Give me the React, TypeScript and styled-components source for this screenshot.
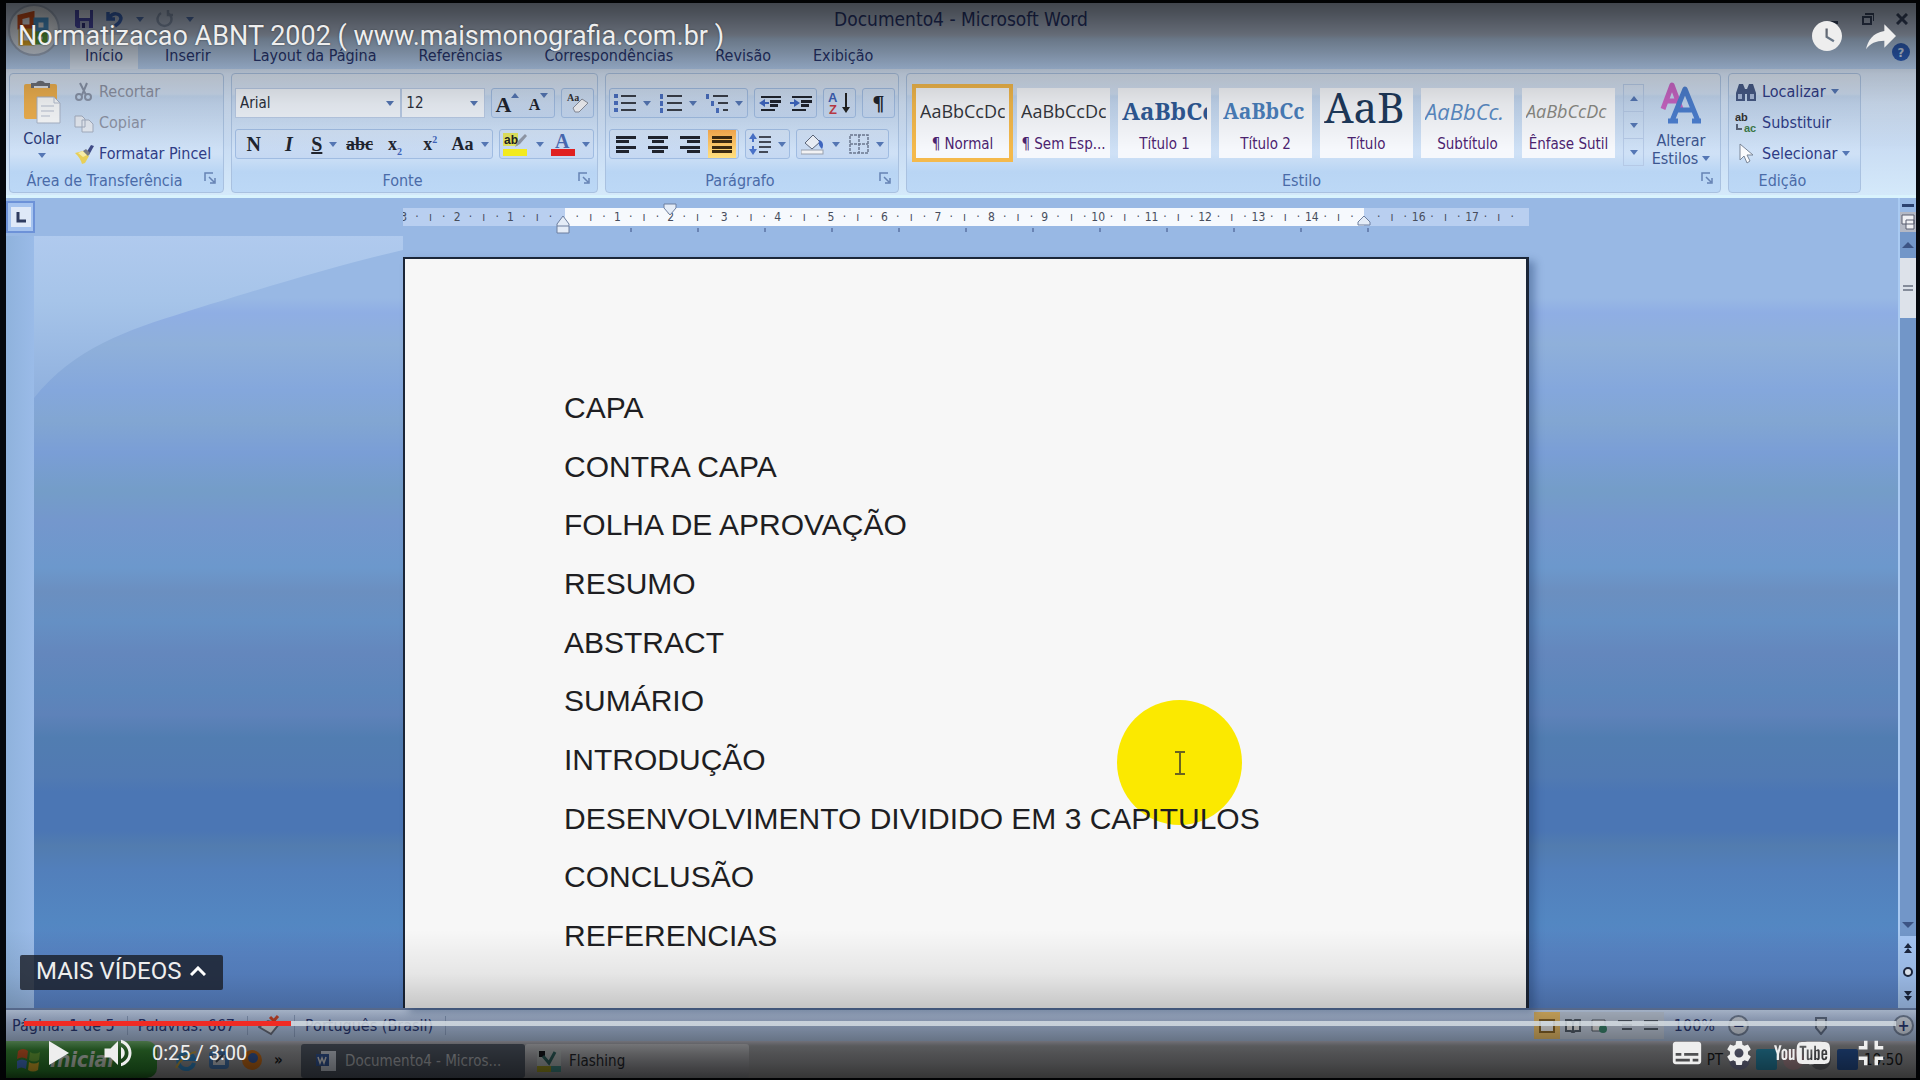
import React, { useState } from 'react';
import styled, { createGlobalStyle, css } from 'styled-components';
import { MdWatchLater, MdReply, MdSubtitles, MdSettings, MdFullscreenExit, MdVolumeUp } from 'react-icons/md';
import { ImYoutube2 } from 'react-icons/im';

const GlobalStyle = createGlobalStyle`
  * { box-sizing: border-box; }
  body { margin: 0; background: #000; }
  button, select, input { font: inherit; color: inherit; margin: 0; padding: 0; border: 0; background: none; }
  button { cursor: pointer; }
  svg { display: block; flex: none; }
`;

const uiFont = "'DejaVu Sans Condensed', 'DejaVu Sans', sans-serif";

const Player = styled.main`
  display: grid;
  min-height: 100vh;
  background: #05080d;
`;

/* ---------- recorded window ---------- */

const WordWindow = styled.section`
  grid-area: 1 / 1;
  display: flex;
  flex-direction: column;
  min-width: 0;
  border: solid #05080d;
  border-width: 3px 4px 2px 6px;
  font-family: ${uiFont};
  font-size: 16px;
  color: #2b3a78;
  white-space: nowrap;
  overflow: hidden;
`;

const Header = styled.header`
  position: relative;
  background: linear-gradient(#c3d0e6 0 32px, #bfd8f6 36px, #b6d0f2 100%);
`;

const TitleBar = styled.div`
  display: grid;
  grid-template-columns: 1fr auto 1fr;
  align-items: center;
  height: 32px;
  padding: 0 8px;
  font-size: 19px;
  line-height: 22px;
`;

const QuickAccess = styled.div`
  display: flex;
  align-items: center;
  gap: 12px;
  padding-left: 60px;
`;

const WindowButtons = styled.div`
  display: flex;
  justify-content: flex-end;
  gap: 22px;
`;

const PlainButton = styled.button`
  display: flex;
  align-items: center;
  justify-content: center;
`;

const OfficeButton = styled.button`
  position: absolute;
  left: 2px;
  top: 1px;
  width: 52px;
  height: 52px;
  border: 2px solid #a8b6cc;
  border-radius: 50%;
  background: radial-gradient(circle at 50% 40%, #fff, #dde6f2 80%);
  display: flex;
  align-items: center;
  justify-content: center;
`;

const Tabs = styled.nav`
  display: flex;
  gap: 12px;
  height: 34px;
  padding: 0 6px 0 64px;
`;

const Tab = styled.button<{ $active?: boolean }>`
  padding: 6px 15px 0;
  border-radius: 4px 4px 0 0;
  background: ${p => (p.$active ? '#dce8f7' : 'none')};
`;

const HelpButton = styled.button`
  margin-left: auto;
  align-self: center;
  width: 18px;
  height: 18px;
  border-radius: 50%;
  background: #2f63c4;
  color: #dbe8ff;
  font-size: 13px;
  font-weight: bold;
`;

const Ribbon = styled.div`
  display: flex;
  gap: 7px;
  padding: 4px 3px 2px;
  background: linear-gradient(#d6e4f6, #c9dcf3 60%, #d4e9fa);
  border-bottom: 3px solid #d9f3fd;
`;

const Group = styled.fieldset<{ $w?: number }>`
  display: flex;
  flex-direction: column;
  flex: none;
  width: ${p => (p.$w ? p.$w + 'px' : 'auto')};
  height: 120px;
  margin: 0;
  padding: 0;
  min-width: 0;
  border: 1px solid #a9c1e0;
  border-radius: 4px;
  background: linear-gradient(#dbe5f2 0, #cfdef2 20px, #c3d7f0 22px, #cfe1f6 80px, #b9d5f4 98px, #bcd8f6);
`;

const GroupBody = styled.div<{ $gap?: number }>`
  flex: 1;
  display: flex;
  gap: ${p => p.$gap ?? 0}px;
`;

const GroupLabel = styled.div`
  position: relative;
  height: 22px;
  line-height: 22px;
  text-align: center;
  padding-right: 24px;
  color: #4a6ba8;
`;

const Launcher = styled.button`
  position: absolute;
  right: 6px;
  top: 2px;
`;

const PasteButton = styled.button`
  display: flex;
  flex-direction: column;
  align-items: center;
  width: 64px;
  padding-top: 6px;
  gap: 5px;
`;

const CommandList = styled.div`
  display: flex;
  flex-direction: column;
  padding-top: 2px;
`;

const Command = styled.button<{ $dim?: boolean }>`
  display: flex;
  align-items: center;
  gap: 5px;
  height: 31px;
  color: ${p => (p.$dim ? '#8d93a5' : '#2f3c86')};
`;

const ToolRows = styled.div`
  flex: 1;
  display: flex;
  flex-direction: column;
  gap: 11px;
  padding: 14px 3px 0;
`;

const ToolRow = styled.div<{ $gap?: number }>`
  display: flex;
  gap: ${p => p.$gap ?? 6}px;
`;

const ToolSet = styled.div<{ $w: number }>`
  display: flex;
  align-items: center;
  justify-content: space-around;
  width: ${p => p.$w}px;
  height: 30px;
  border: 1px solid #a0bce2;
  border-radius: 3px;
  background: linear-gradient(#cfdff3, #c5d8f2);
`;

const Tool = styled.button<{ $on?: boolean; $tight?: boolean }>`
  display: flex;
  align-items: ${p => (p.$tight ? 'flex-start' : 'center')};
  justify-content: center;
  gap: ${p => (p.$tight ? 0 : 7)}px;
  height: 28px;
  min-width: 28px;
  padding-top: ${p => (p.$tight ? 4 : 0)}px;
  color: #20242e;
  ${p => p.$on && css`background: linear-gradient(#f6a94e, #ffdf7e);`}
`;

const Glyph = styled.span<{ $size?: number; $italic?: boolean; $bold?: boolean; $line?: string }>`
  font-family: 'Liberation Serif', serif;
  font-size: ${p => p.$size ?? 18}px;
  line-height: 24px;
  font-style: ${p => (p.$italic ? 'italic' : 'normal')};
  font-weight: ${p => (p.$bold ? 'bold' : 'normal')};
  text-decoration: ${p => p.$line ?? 'none'};
  sub, sup { font-size: 10px; color: #3e62b8; line-height: 0; }
`;

const Combo = styled.div<{ $w: number }>`
  display: flex;
  align-items: center;
  width: ${p => p.$w}px;
  height: 30px;
  padding-right: 6px;
  border: 1px solid #b9cbe6;
  background: #eff4fb;
  color: #2a2f3c;
  font-size: 15px;
  select { flex: 1; min-width: 0; appearance: none; padding-left: 4px; outline: 0; }
`;

const Gallery = styled.div`
  display: flex;
  padding: 10px 0 0 5px;
`;

const StyleTile = styled.button<{ $on?: boolean }>`
  display: flex;
  flex-direction: column;
  width: 93px;
  height: 70px;
  margin: 4px 4px 0;
  padding: 0 4px;
  overflow: hidden;
  background: #f6f8fc;
  color: #4c2370;
  text-align: center;
  ${p => p.$on && css`outline: 4px solid #f4b94c;`}
`;

const Sample = styled.span<{ $c: string; $size: number; $serif?: boolean; $bold?: boolean; $italic?: boolean }>`
  width: 100%;
  height: 46px;
  line-height: ${p => (p.$size > 30 ? 38 : 46)}px;
  overflow: hidden;
  text-align: left;
  color: ${p => p.$c};
  font-family: ${p => (p.$serif ? "'Noto Serif', 'DejaVu Serif Condensed', 'DejaVu Serif', serif" : "'Open Sans', sans-serif")};
  font-size: ${p => p.$size}px;
  font-weight: ${p => (p.$bold ? 'bold' : 'normal')};
  font-style: ${p => (p.$italic ? 'italic' : 'normal')};
`;

const TileName = styled.span`
  width: 100%;
  display: flex;
  justify-content: center;
  line-height: 20px;
  font-size: 15px;
`;

const GalleryScroll = styled.div`
  display: flex;
  flex-direction: column;
  width: 21px;
  height: 82px;
  margin-left: 4px;
  border: 1px solid #b5c9e6;
  button { flex: 1; display: flex; align-items: center; justify-content: center; }
  button + button { border-top: 1px solid #b5c9e6; }
`;

const ChangeStyles = styled.button`
  display: flex;
  flex-direction: column;
  align-items: center;
  width: 74px;
  padding-top: 8px;
  gap: 8px;
  line-height: 18px;
  color: #3c558f;
  span span { display: inline-block; margin-left: 4px; vertical-align: 3px; }
`;

const WorkArea = styled.div`
  flex: 1;
  display: grid;
  grid-template-columns: 1fr 18px;
  min-height: 0;
  background: #98b8e4;
`;

const WorkMain = styled.div`
  display: flex;
  flex-direction: column;
  min-height: 0;
`;

const RulerRow = styled.div`
  display: flex;
  height: 38px;
`;

const TabStop = styled.button`
  width: 29px;
  height: 32px;
  border: 2px solid #6d92d8;
  background: #a5c3ef;
  display: flex;
  align-items: center;
  justify-content: center;
  margin-top: 3px;
`;

const Ruler = styled.div`
  position: relative;
  width: 1126px;
  margin: 10px 0 0 368px;
`;

const RulerScale = styled.div`
  display: flex;
  height: 18px;
  overflow: hidden;
  padding-right: 4px;
  background: linear-gradient(90deg, #b9cff0 162px, #f6f9fd 162px 961px, #b9cff0 961px);
  font-size: 12px;
  line-height: 18px;
  color: #474d5c;
`;

const Centimeter = styled.div`
  flex: 1;
  display: grid;
  grid-template-columns: repeat(4, 1fr);
  min-width: 0;
  margin-left: -6px;
  margin-right: 6px;
  span { display: flex; justify-content: center; min-width: 0; }
`;

const TabTicks = styled.div`
  height: 4px;
  margin: 2px 160px 0 227px;
  background: repeating-linear-gradient(90deg, #6a84b4 0 2px, transparent 2px 67px);
`;

const RulerMarker = styled.span<{ $x: number; $y: number }>`
  position: absolute;
  left: ${p => p.$x}px;
  top: ${p => p.$y}px;
`;

const Desk = styled.div`
  flex: 1;
  display: grid;
  grid-template-columns: 28px 369px minmax(0, 1126px) 1fr;
  background:
    linear-gradient(#98b8e4 0, #98b8e4 8%, #8faee4 10%, #8fb0da 14%, #84a7dc 20%, #82a6d2 24%,
      #7a9ed6 28%, #749dc8 33%, #7497cd 37%, #6c98cc 43%, #6b8fc0 46%, #6590c4 50%, #6487bd 54%,
      #5c86bb 59%, #5e82b9 62%, #517db1 65%, #517ab2 70%, #4b76b4 72%, #4b76b4 77%, #527caf 79%,
      #527fbb 82%, #5387c2 89%, #5884c4 93%, #5a84c8 100%);
`;

const SideRuler = styled.div`
  background: linear-gradient(90deg, #8fb2dc, #9abbe8);
`;

const Swoosh = styled.svg`
  width: 100%;
  height: 162px;
`;

const Paper = styled.article`
  position: relative;
  margin-top: 21px;
  padding: 132px 20px 0 159px;
  border: solid #1b2638;
  border-width: 2px 3px 0 2px;
  background: #f7f7f7;
  box-shadow: 6px 4px 8px rgba(30, 60, 110, 0.4);
`;

const Outline = styled.ul`
  position: relative;
  display: flex;
  flex-direction: column;
  justify-content: space-between;
  height: 562px;
  margin: 0;
  padding: 0;
  list-style: none;
  font-family: 'Liberation Sans', Arial, sans-serif;
  font-size: 30px;
  line-height: 34px;
  color: #1e1e22;
`;

const Pointer = styled.span`
  position: absolute;
  left: 712px;
  top: 441px;
  width: 125px;
  height: 125px;
  border-radius: 50%;
  background: #fbe900;
  display: flex;
  align-items: center;
  justify-content: center;
`;

const ScrollBar = styled.div`
  display: flex;
  flex-direction: column;
  align-items: center;
  border-left: 2px solid #a9caf2;
  background: #7296c8;
`;

const ScrollPart = styled.button<{ $h: number; $bg?: string; $push?: boolean }>`
  width: 100%;
  height: ${p => p.$h}px;
  margin-top: ${p => (p.$push ? 'auto' : 0)};
  background: ${p => p.$bg ?? 'none'};
  display: flex;
  align-items: center;
  justify-content: center;
`;

const StatusBar = styled.footer`
  display: flex;
  align-items: center;
  height: 33px;
  border-top: 2px solid #6c83ae;
  background: linear-gradient(#cfe0fa, #b7cbee 40%, #b3c9e8);
`;

const StatusItem = styled.span`
  padding: 0 12px 0 10px;
  border-right: 1px solid #94a9cc;
  &:first-child { padding-left: 6px; }
`;

const ViewButtons = styled.div`
  display: flex;
  margin-left: auto;
  background: #c8d4e6;
`;

const ViewButton = styled.button<{ $on?: boolean }>`
  width: 26px;
  height: 27px;
  display: flex;
  align-items: center;
  justify-content: center;
  color: #56616f;
  ${p => p.$on && css`background: #f3c66e; color: #8f6b2c;`}
`;

const Zoom = styled.div`
  display: flex;
  align-items: center;
  gap: 13px;
  padding: 0 2px 0 10px;
`;

const ZoomTrack = styled.div`
  width: 118px;
  display: flex;
  justify-content: center;
`;

const RoundButton = styled.button`
  width: 21px;
  height: 21px;
  border: 2px solid #77869f;
  border-radius: 50%;
  background: #dbe3ef;
  line-height: 14px;
  font-weight: bold;
`;

const TaskBar = styled.div`
  display: flex;
  align-items: stretch;
  height: 37px;
  background: linear-gradient(#c4c4d2 0, #a6a8ac 5px, #a9aaae 60%, #a2a2a2);
  color: #1c1e22;
  font-size: 15px;
`;

const StartButton = styled.button`
  display: flex;
  align-items: center;
  gap: 8px;
  width: 151px;
  padding-left: 10px;
  border-radius: 0 10px 10px 0;
  background: linear-gradient(#7dc37a, #3f9a3c 25%, #2f9130 80%, #246f24);
  color: #e9f3e6;
  font-size: 21px;
  font-style: italic;
  font-weight: bold;
`;

const QuickLaunch = styled.div`
  display: flex;
  align-items: center;
  gap: 11px;
  width: 144px;
  padding-left: 18px;
`;

const Task = styled.button<{ $on?: boolean }>`
  display: flex;
  align-items: center;
  gap: 8px;
  width: 224px;
  margin-top: 3px;
  padding-left: ${p => (p.$on ? 14 : 12)}px;
  border-radius: 3px;
  background: ${p => (p.$on ? '#58616f' : 'linear-gradient(#d2d3d8, #9a9ba0)')};
  color: ${p => (p.$on ? '#c9ccd2' : '#25282e')};
`;

const Tray = styled.div`
  display: flex;
  align-items: center;
  gap: 6px;
  margin-left: auto;
  padding-right: 13px;
`;

const TrayIcon = styled.i<{ $c: string; $round?: boolean }>`
  width: 21px;
  height: 21px;
  background: ${p => p.$c};
  border-radius: ${p => (p.$round ? '50%' : '2px')};
`;

/* ---------- player chrome ---------- */

const Chrome = styled.section`
  grid-area: 1 / 1;
  position: relative;
  z-index: 1;
  display: flex;
  flex-direction: column;
  min-width: 0;
  font-family: Roboto, sans-serif;
  color: #eee;
  background:
    linear-gradient(rgba(0,0,0,.68) 0, rgba(0,0,0,.62) 12px, rgba(0,0,0,.5) 32px, rgba(0,0,0,.34) 54px,
      rgba(0,0,0,.18) 74px, rgba(0,0,0,.08) 104px, transparent 150px),
    linear-gradient(0deg, rgba(0,0,0,.68) 0, rgba(0,0,0,.52) 26px, rgba(0,0,0,.36) 48px,
      rgba(0,0,0,.2) 72px, rgba(0,0,0,.07) 106px, transparent 150px);
`;

const TopBar = styled.div`
  display: flex;
  align-items: center;
  justify-content: space-between;
  height: 72px;
  padding: 0 19px 0 18px;
`;

const VideoTitle = styled.a`
  font-size: 27px;
  color: #eee;
  text-decoration: none;
  text-shadow: 0 0 2px rgba(0, 0, 0, 0.5);
`;

const Actions = styled.div<{ $gap: number }>`
  display: flex;
  align-items: center;
  gap: ${p => p.$gap}px;
  margin-left: auto;
`;

const MoreVideos = styled.button`
  display: flex;
  align-items: center;
  gap: 8px;
  align-self: flex-start;
  height: 35px;
  margin: auto 0 31px 20px;
  padding: 0 17px 4px 16px;
  border-radius: 2px;
  background: rgba(23, 26, 33, 0.78);
  font-size: 24px;
`;

const Seek = styled.input`
  appearance: none;
  display: block;
  height: 5px;
  margin: 0 24px;
  border-radius: 0;
  outline: 0;
  &::-webkit-slider-thumb { appearance: none; width: 0; height: 0; }
`;

const Controls = styled.div`
  display: flex;
  align-items: center;
  height: 54px;
  padding: 0 28px 0 49px;
`;

const Playback = styled.div`
  display: flex;
  align-items: center;
  gap: 31px;
`;

const Time = styled.span`
  margin-left: 16px;
  font-size: 20px;
`;

/* ---------- small drawings ---------- */

const Arrow = ({ up }: { up?: boolean }) => (
  <svg width="8" height="5" viewBox="0 0 8 5"><path d={up ? 'M0 5h8L4 0z' : 'M0 0h8L4 5z'} fill="#5577b5" /></svg>
);

const LauncherIcon = () => (
  <svg width="13" height="13" viewBox="0 0 13 13" fill="none" stroke="#6683b4" strokeWidth="1.5">
    <path d="M1 9V1h8M5 5l5 5M11 6v5H6" />
  </svg>
);

const Lines = ({ rows, w = 22, color = '#20242e' }: { rows: [number, number][]; w?: number; color?: string }) => (
  <svg width={w} height="20" viewBox={`0 0 ${w} 20`}>
    {rows.map(([x, len], i) => <rect key={i} x={x} y={2 + i * 4 + (i > 1 ? 2 : 0)} width={len} height="3" fill={color} />)}
  </svg>
);

const ListIcon = ({ kind }: { kind: 'dot' | 'num' | 'tree' }) => (
  <svg width="22" height="20" viewBox="0 0 22 20">
    {[2, 9, 16].map((y, i) => {
      const x = kind === 'tree' ? i * 5 : 0;
      return (
        <g key={y}>
          <rect x={x} y={y - 1} width={kind === 'dot' ? 4 : 3} height={kind === 'dot' ? 4 : 5} fill="#4a6fc0" />
          <rect x={x + 7} y={y} width={15 - x} height="2" fill="#3a3f4a" />
        </g>
      );
    })}
  </svg>
);

const IndentIcon = ({ out }: { out?: boolean }) => (
  <svg width="22" height="20" viewBox="0 0 22 20">
    <path d="M2 3h20v2H2zM11 7h11v3H11zM11 11h8v3h-8zM2 16h14v2H2z" fill="#20242e" />
    <path d={out ? 'M0 10l6-4v3h4v2H6v3z' : 'M10 10L4 6v3H0v2h4v3z'} fill="#3e66c0" />
  </svg>
);

const SaveIcon = () => (
  <svg width="20" height="20" viewBox="0 0 20 20">
    <path d="M1 1h18v18H3l-2-2z" fill="#4b4db0" /><path d="M5 1h11v8H5z" fill="#dfe5f4" /><path d="M6 12h9v7H6z" fill="#aab2d8" /><path d="M8 14h3v5H8z" fill="#30327c" />
  </svg>
);

const UndoIcon = () => (
  <svg width="18" height="18" viewBox="0 0 18 18" fill="none" stroke="#3c68bd" strokeWidth="3.5">
    <path d="M2 2v7h7M3 8c4-6 11-5 12 0 0 4-3 6-6 8" />
  </svg>
);

const RedoIcon = () => (
  <svg width="18" height="18" viewBox="0 0 18 18" fill="none" stroke="#8fa0bb" strokeWidth="2.5">
    <path d="M12 3a7 7 0 1 1-7 0M12 0v5h5" />
  </svg>
);

const OfficeLogo = () => (
  <svg width="36" height="38" viewBox="0 0 36 38" fill="none" strokeWidth="5">
    <path d="M4 16V6l12-3v13z" stroke="#d9541e" /><path d="M20 9h10v10H20z" stroke="#4f9fdb" />
    <path d="M5 20v12h10V20z" stroke="#f0b429" /><path d="M19 23h10v8H19z" stroke="#5fae3f" />
  </svg>
);

const PasteIcon = () => (
  <svg width="38" height="44" viewBox="0 0 38 44">
    <rect x="1" y="4" width="33" height="35" rx="2" fill="#eeb04f" /><path d="M8 3h5a5 4 0 0 1 9 0h5v5H8z" fill="#6d7078" />
    <path d="M11 7h14" stroke="#dfe3ea" strokeWidth="2" /><path d="M14 17h17l6 6v20H14z" fill="#f8fafc" stroke="#a9b4c8" />
    <path d="M31 17v6h6M18 26h13M18 31h13M18 36h9" stroke="#b7c0d2" fill="none" />
  </svg>
);

const CutIcon = () => (
  <svg width="20" height="20" viewBox="0 0 20 20" fill="none" stroke="#8a95aa" strokeWidth="2">
    <path d="M6 1l6 12M13 1L8 13" /><circle cx="5" cy="15" r="3" /><circle cx="14" cy="15" r="3" />
  </svg>
);

const CopyIcon = () => (
  <svg width="20" height="20" viewBox="0 0 20 20" fill="#e4e9f1" stroke="#a3adbf">
    <path d="M1 3h7l3 3v8H1zM8 7h7l4 4v8H8z" />
  </svg>
);

const BrushIcon = () => (
  <svg width="20" height="20" viewBox="0 0 20 20">
    <path d="M12 9l5-8 3 1-5 9z" fill="#3f4a86" /><path d="M1 9l8-2 6 5-4 7-3 1c-1-4-3-7-7-11z" fill="#e8cf58" /><path d="M4 9l5-2 4 4-4 2z" fill="#f6eba6" /><path d="M9 7l3-2 4 4-2 3z" fill="#777b84" />
  </svg>
);

const EraserIcon = () => (
  <svg width="24" height="22" viewBox="0 0 24 22">
    <text x="1" y="9" fontSize="10" fontFamily="Liberation Serif" fontWeight="bold" fill="#333">Aa</text>
    <path d="M7 16L16 7l6 4-9 9H9z" fill="#f3f4f8" stroke="#8a8f9c" />
  </svg>
);

const PenIcon = () => (
  <svg width="26" height="24" viewBox="0 0 26 24">
    <rect x="0" y="1" width="15" height="13" fill="#dfe05c" /><text x="1" y="12" fontSize="12" fontFamily="Liberation Sans" fontWeight="bold" fill="#222">ab</text>
    <path d="M12 15l3-6 7-7 2 2-7 8z" fill="#8f97a6" /><rect y="17" width="24" height="7" fill="#f3ea1e" />
  </svg>
);

const FontColorIcon = () => (
  <svg width="24" height="24" viewBox="0 0 24 24">
    <text x="4" y="16" fontSize="20" fontFamily="Liberation Serif" fontWeight="bold" fill="#4868b0">A</text><rect y="17" width="24" height="7" fill="#e02020" />
  </svg>
);

const SortIcon = () => (
  <svg width="24" height="24" viewBox="0 0 24 24">
    <text x="0" y="11" fontSize="13" fontFamily="Liberation Sans" fontWeight="bold" fill="#3e62b8">A</text>
    <text x="1" y="23" fontSize="13" fontFamily="Liberation Sans" fontWeight="bold" fill="#c23b46">Z</text>
    <path d="M18 2v16" stroke="#222" strokeWidth="2" /><path d="M14 16h8l-4 6z" fill="#222" />
  </svg>
);

const SpacingIcon = () => (
  <svg width="22" height="22" viewBox="0 0 22 22">
    <path d="M4 0l4 6H5v3H3V6H0zM4 22l4-6H5v-3H3v3H0z" fill="#4a72c8" /><path d="M10 3h12v2H10zM10 8h12v2H10zM10 13h12v2H10zM10 18h9v2h-9z" fill="#444a58" />
  </svg>
);

const FillIcon = () => (
  <svg width="24" height="22" viewBox="0 0 24 22">
    <path d="M4 10l8-8 7 7-8 7z" fill="#e9eef6" stroke="#5a6478" /><path d="M18 7c4 1 5 5 3 9-2-2-4-4-3-9z" fill="#3e66c0" /><rect y="17" width="22" height="4" fill="#f2f2f4" stroke="#98a0ae" />
  </svg>
);

const BorderIcon = () => (
  <svg width="20" height="20" viewBox="0 0 20 20" fill="none" stroke="#6c7890" strokeWidth="1.5">
    <path d="M1 1h18v18H1zM10 1v18M1 10h18" strokeDasharray="3 1" />
  </svg>
);

const StylesIcon = () => (
  <svg width="42" height="42" viewBox="0 0 42 42" fill="none" strokeLinejoin="round">
    <path d="M3 27L12 3l9 24M6 19h12" stroke="#c865c4" strokeWidth="5" /><path d="M12 39L25 7l13 32M17 28h16M8 39h10M32 39h9" stroke="#4c7fd0" strokeWidth="5" />
  </svg>
);

const FindIcon = () => (
  <svg width="22" height="20" viewBox="0 0 22 20" fill="#465a86">
    <path d="M4 2h4l2 5v12H1v-8zM14 2h4l3 9v8h-9V7zM8 7h6v5H8z" /><path d="M3 12h4v5H3zM15 12h4v5h-4z" fill="#a9bbdc" />
  </svg>
);

const ReplaceIcon = () => (
  <svg width="22" height="22" viewBox="0 0 22 22" fontFamily="Liberation Sans" fontWeight="bold" fontSize="11">
    <text x="0" y="9" fill="#333">ab</text><text x="9" y="20" fill="#3c7a4a">ac</text><path d="M2 12v5h5" fill="none" stroke="#5a6478" strokeWidth="2" />
  </svg>
);

const SelectIcon = () => (
  <svg width="22" height="22" viewBox="0 0 22 22"><path d="M5 1v16l4-4 3 7 3-2-3-6h6z" fill="#fafbfd" stroke="#7a8698" /></svg>
);

const FlagIcon = () => (
  <svg width="26" height="24" viewBox="0 0 26 24">
    <path d="M2 3q5-4 10 0l-1 8q-5-3-10 0z" fill="#e8642c" /><path d="M14 4q5 3 10 0l-1 8q-5 3-10 0z" fill="#7cc243" />
    <path d="M1 13q5-3 10 0l-1 8q-5-3-9 0z" fill="#4f86e8" /><path d="M13 14q5 3 10 0l-1 8q-5 3-10 0z" fill="#f4c430" />
  </svg>
);

const IeIcon = () => (
  <svg width="22" height="22" viewBox="0 0 22 22" fill="none"><path d="M19 14a8 8 0 1 1 0-4H5" stroke="#3a9be0" strokeWidth="4" /><path d="M1 19C4 12 13 4 21 3" stroke="#e0b84a" strokeWidth="2" /></svg>
);

const DesktopIcon = () => (
  <svg width="22" height="22" viewBox="0 0 22 22"><rect x="1" y="2" width="20" height="18" rx="4" fill="#4f86c6" /><path d="M5 6h12v10H5z" fill="#e2e9f2" /><path d="M8 13l7-7" stroke="#4a5568" strokeWidth="2" /></svg>
);

const FirefoxIcon = () => (
  <svg width="22" height="22" viewBox="0 0 22 22"><circle cx="11" cy="11" r="10" fill="#e07a1c" /><circle cx="12" cy="9" r="5" fill="#3f66b4" /></svg>
);

const DocIcon = () => (
  <svg width="22" height="22" viewBox="0 0 22 22"><path d="M6 1h15v20H6z" fill="#dfe6f2" /><path d="M1 4h13v12H1z" fill="#3a62ac" /><path d="M3 7l2 6 2-5 2 5 2-6" fill="none" stroke="#fff" strokeWidth="1.5" /></svg>
);

const FlashingIcon = () => (
  <svg width="24" height="22" viewBox="0 0 24 22"><rect width="24" height="22" fill="#c9d0d0" /><path d="M2 1h6v6H2z" fill="#16181c" /><path d="M6 6l6 7 6-11" fill="none" stroke="#35706c" strokeWidth="3" /><path d="M0 16h14v6H0z" fill="#b2ac28" /><path d="M14 16h10v6H14z" fill="#4a9c96" /></svg>
);

const rulerNumbers = ['3', '2', '1', '', '1', '2', '3', '4', '5', '6', '7', '8', '9', '10', '11', '12', '13', '14', '', '16', '17'];

const outline = [
  'CAPA', 'CONTRA CAPA', 'FOLHA DE APROVAÇÃO', 'RESUMO', 'ABSTRACT', 'SUMÁRIO', 'INTRODUÇÃO',
  'DESENVOLVIMENTO DIVIDIDO EM 3 CAPITULOS', 'CONCLUSÃO', 'REFERENCIAS',
];

const tiles = [
  { name: '¶ Normal', text: 'AaBbCcDc', c: '#33363c', size: 18, on: true },
  { name: '¶ Sem Esp...', text: 'AaBbCcDc', c: '#33363c', size: 18 },
  { name: 'Título 1', text: 'AaBbCc', c: '#2f5a96', size: 24, serif: true, bold: true },
  { name: 'Título 2', text: 'AaBbCc', c: '#4a80bd', size: 21, serif: true, bold: true },
  { name: 'Título', text: 'AaB', c: '#1e3a5c', size: 42, serif: true },
  { name: 'Subtítulo', text: 'AaBbCc.', c: '#5b8cc6', size: 22, italic: true },
  { name: 'Ênfase Sutil', text: 'AaBbCcDc', c: '#8a8a84', size: 18, italic: true },
];

const tabs = ['Início', 'Inserir', 'Layout da Página', 'Referências', 'Correspondências', 'Revisão', 'Exibição'];

const duration = 180;
const clock = (s: number) => `${Math.floor(s / 60)}:${String(Math.floor(s % 60)).padStart(2, '0')}`;

const WordHeader = () => (
  <Header>
    <TitleBar>
      <QuickAccess>
        <PlainButton aria-label="Salvar"><SaveIcon /></PlainButton>
        <PlainButton aria-label="Desfazer"><UndoIcon /></PlainButton>
        <Arrow />
        <PlainButton aria-label="Refazer"><RedoIcon /></PlainButton>
        <PlainButton aria-label="Personalizar"><Arrow /></PlainButton>
      </QuickAccess>
      <span>Documento4 - Microsoft Word</span>
      <WindowButtons>
        <PlainButton aria-label="Minimizar"><svg width="12" height="12"><path d="M0 8h10v3H0z" fill="#3b4a68" /></svg></PlainButton>
        <PlainButton aria-label="Restaurar"><svg width="12" height="12"><path d="M3 1h9v7M1 4h8v7H1z" fill="none" stroke="#3b4a68" strokeWidth="2" /></svg></PlainButton>
        <PlainButton aria-label="Fechar"><svg width="12" height="12"><path d="M1 1l10 10M11 1L1 11" stroke="#3b4a68" strokeWidth="3" /></svg></PlainButton>
      </WindowButtons>
    </TitleBar>
    <Tabs>
      {tabs.map((t, i) => <Tab key={t} $active={i === 0}>{t}</Tab>)}
      <HelpButton aria-label="Ajuda">?</HelpButton>
    </Tabs>
    <OfficeButton aria-label="Botão Office"><OfficeLogo /></OfficeButton>
  </Header>
);

const WordRibbon = () => (
  <Ribbon>
    <Group $w={215}>
      <GroupBody>
        <PasteButton><PasteIcon />Colar<Arrow /></PasteButton>
        <CommandList>
          <Command $dim><CutIcon />Recortar</Command>
          <Command $dim><CopyIcon />Copiar</Command>
          <Command><BrushIcon />Formatar Pincel</Command>
        </CommandList>
      </GroupBody>
      <GroupLabel>Área de Transferência<Launcher aria-label="Abrir Área de Transferência"><LauncherIcon /></Launcher></GroupLabel>
    </Group>

    <Group $w={367}>
      <ToolRows>
        <ToolRow $gap={0}>
          <Combo $w={167}><select aria-label="Fonte"><option>Arial</option></select><Arrow /></Combo>
          <Combo $w={84}><select aria-label="Tamanho da fonte"><option>12</option></select><Arrow /></Combo>
          <ToolRow>
            <span />
            <ToolSet $w={64}>
              <Tool $tight aria-label="Aumentar fonte"><Glyph $size={22} $bold>A</Glyph><Arrow up /></Tool>
              <Tool $tight aria-label="Reduzir fonte"><Glyph $size={16} $bold>A</Glyph><Arrow /></Tool>
            </ToolSet>
            <ToolSet $w={33}><Tool aria-label="Limpar formatação"><EraserIcon /></Tool></ToolSet>
          </ToolRow>
        </ToolRow>
        <ToolRow>
          <ToolSet $w={259}>
            <Tool><Glyph $bold $size={20}>N</Glyph></Tool>
            <Tool><Glyph $italic $bold $size={20}>I</Glyph></Tool>
            <Tool><Glyph $bold $line="underline" $size={20}>S</Glyph><Arrow /></Tool>
            <Tool><Glyph $bold $line="line-through">abc</Glyph></Tool>
            <Tool><Glyph $bold>x<sub>2</sub></Glyph></Tool>
            <Tool><Glyph $bold>x<sup>2</sup></Glyph></Tool>
            <Tool><Glyph $bold>Aa</Glyph><Arrow /></Tool>
          </ToolSet>
          <ToolSet $w={95}>
            <Tool aria-label="Realce"><PenIcon /><Arrow /></Tool>
            <Tool aria-label="Cor da fonte"><FontColorIcon /><Arrow /></Tool>
          </ToolSet>
        </ToolRow>
      </ToolRows>
      <GroupLabel>Fonte<Launcher aria-label="Abrir Fonte"><LauncherIcon /></Launcher></GroupLabel>
    </Group>

    <Group $w={294}>
      <ToolRows>
        <ToolRow>
          <ToolSet $w={139}>
            <Tool aria-label="Marcadores"><ListIcon kind="dot" /><Arrow /></Tool>
            <Tool aria-label="Numeração"><ListIcon kind="num" /><Arrow /></Tool>
            <Tool aria-label="Lista de vários níveis"><ListIcon kind="tree" /><Arrow /></Tool>
          </ToolSet>
          <ToolSet $w={63}>
            <Tool aria-label="Diminuir recuo"><IndentIcon out /></Tool>
            <Tool aria-label="Aumentar recuo"><IndentIcon /></Tool>
          </ToolSet>
          <ToolSet $w={33}><Tool aria-label="Classificar"><SortIcon /></Tool></ToolSet>
          <ToolSet $w={33}><Tool aria-label="Mostrar tudo"><Glyph $size={22} $bold>¶</Glyph></Tool></ToolSet>
        </ToolRow>
        <ToolRow>
          <ToolSet $w={130}>
            <Tool aria-label="Esquerda"><Lines rows={[[1, 20], [1, 13], [1, 20], [1, 13]]} /></Tool>
            <Tool aria-label="Centralizar"><Lines rows={[[1, 20], [5, 12], [1, 20], [5, 12]]} /></Tool>
            <Tool aria-label="Direita"><Lines rows={[[1, 20], [8, 13], [1, 20], [8, 13]]} /></Tool>
            <Tool aria-label="Justificar" $on><Lines color="#3c2a10" rows={[[1, 20], [1, 20], [1, 20], [1, 20]]} /></Tool>
          </ToolSet>
          <ToolSet $w={45}><Tool aria-label="Espaçamento"><SpacingIcon /><Arrow /></Tool></ToolSet>
          <ToolSet $w={93}>
            <Tool aria-label="Sombreamento"><FillIcon /><Arrow /></Tool>
            <Tool aria-label="Bordas"><BorderIcon /><Arrow /></Tool>
          </ToolSet>
        </ToolRow>
      </ToolRows>
      <GroupLabel>Parágrafo<Launcher aria-label="Abrir Parágrafo"><LauncherIcon /></Launcher></GroupLabel>
    </Group>

    <Group $w={815}>
      <GroupBody>
        <Gallery>
          {tiles.map(t => (
            <StyleTile key={t.name} $on={t.on}>
              <Sample $c={t.c} $size={t.size} $serif={t.serif} $bold={t.bold} $italic={t.italic}>{t.text}</Sample>
              <TileName>{t.name}</TileName>
            </StyleTile>
          ))}
          <GalleryScroll>
            <button aria-label="Linha anterior"><Arrow up /></button>
            <button aria-label="Próxima linha"><Arrow /></button>
            <button aria-label="Mais estilos"><Arrow /></button>
          </GalleryScroll>
        </Gallery>
        <ChangeStyles><StylesIcon /><span>Alterar<br />Estilos<span><Arrow /></span></span></ChangeStyles>
      </GroupBody>
      <GroupLabel>Estilo<Launcher aria-label="Abrir Estilo"><LauncherIcon /></Launcher></GroupLabel>
    </Group>

    <Group $w={133}>
      <GroupBody $gap={6}>
        <span />
        <CommandList>
          <Command><FindIcon />Localizar <Arrow /></Command>
          <Command><ReplaceIcon />Substituir</Command>
          <Command><SelectIcon />Selecionar <Arrow /></Command>
        </CommandList>
      </GroupBody>
      <GroupLabel>Edição</GroupLabel>
    </Group>
  </Ribbon>
);

const WordDocument = () => (
  <WorkArea>
    <WorkMain>
      <RulerRow>
        <TabStop aria-label="Tabulação"><svg width="20" height="20"><path d="M0 0h20v20H0z" fill="#dfe9f8" /><path d="M7 5v9h8" stroke="#2f3c60" strokeWidth="3" fill="none" /></svg></TabStop>
        <Ruler>
          <RulerScale>
            {rulerNumbers.map((n, i) => (
              <Centimeter key={i}><span>{n}</span><span>·</span><span>ı</span><span>·</span></Centimeter>
            ))}
          </RulerScale>
          <TabTicks />
          <RulerMarker $x={260} $y={-5}><svg width="14" height="14"><path d="M1 1h12v4l-6 7-6-7z" fill="#e4ecf7" stroke="#6d7f9f" /></svg></RulerMarker>
          <RulerMarker $x={153} $y={6}><svg width="14" height="20"><path d="M1 10l6-8 6 8v9H1zM1 12h12" fill="#e4ecf7" stroke="#6d7f9f" /></svg></RulerMarker>
          <RulerMarker $x={954} $y={6}><svg width="14" height="12"><path d="M1 11V8l6-6 6 6v3z" fill="#e4ecf7" stroke="#6d7f9f" /></svg></RulerMarker>
        </Ruler>
      </RulerRow>
      <Desk>
        <SideRuler />
        <Swoosh viewBox="0 0 370 162" preserveAspectRatio="none">
          <defs><linearGradient id="sw" x1="0" y1="0" x2="0" y2="1"><stop offset="0" stopColor="#b0caee" /><stop offset=".4" stopColor="#a6c4e9" /><stop offset="1" stopColor="#8fb0de" /></linearGradient></defs>
          <path d="M0 0h370v14C300 30 210 58 152 76S40 112 0 162z" fill="url(#sw)" />
        </Swoosh>
        <Paper>
          <Pointer><svg width="12" height="24" fill="none" stroke="#6b6420" strokeWidth="2"><path d="M1 1h10M1 23h10M6 1v22" /></svg></Pointer>
          <Outline>{outline.map(t => <li key={t}>{t}</li>)}</Outline>
        </Paper>
        <span />
      </Desk>
    </WorkMain>
    <ScrollBar>
      <ScrollPart $h={14} $bg="#98b8e4" aria-label="Dividir"><svg width="12" height="3"><path d="M0 0h12v3H0z" fill="#2c4270" /></svg></ScrollPart>
      <ScrollPart $h={20} $bg="#b4b8c4" aria-label="Régua"><svg width="14" height="16"><path d="M1 1h12v9H1zM5 6h8v9H5z" fill="#f0f0f4" stroke="#5a5f70" /></svg></ScrollPart>
      <ScrollPart $h={26} aria-label="Subir"><svg width="12" height="6"><path d="M0 6h12L6 0z" fill="#3c5484" /></svg></ScrollPart>
      <ScrollPart $h={60} $bg="#dde2ea" aria-label="Posição"><svg width="10" height="6"><path d="M0 0h10v2H0zM0 4h10v2H0z" fill="#858c9a" /></svg></ScrollPart>
      <ScrollPart $h={22} $push aria-label="Descer"><svg width="12" height="6"><path d="M0 0h12L6 6z" fill="#3c5484" /></svg></ScrollPart>
      <ScrollPart $h={24} $bg="#a4c4f2" aria-label="Página anterior"><svg width="8" height="10"><path d="M0 5h8L4 0zM0 10h8L4 5z" fill="#1d2740" /></svg></ScrollPart>
      <ScrollPart $h={24} $bg="#a4c4f2" aria-label="Objeto da procura"><svg width="12" height="12"><circle cx="6" cy="6" r="4" fill="#e8eef8" stroke="#1d2740" strokeWidth="2" /></svg></ScrollPart>
      <ScrollPart $h={24} $bg="#a4c4f2" aria-label="Próxima página"><svg width="8" height="10"><path d="M0 0h8L4 5zM0 5h8l-4 5z" fill="#1d2740" /></svg></ScrollPart>
    </ScrollBar>
  </WorkArea>
);

const WordStatus = () => (
  <StatusBar>
    <StatusItem>Página: 1 de 5</StatusItem>
    <StatusItem>Palavras: 667</StatusItem>
    <StatusItem><svg width="24" height="22"><path d="M1 12l9-6 11 3-8 10z" fill="#eef1f6" stroke="#6a7080" strokeWidth="2" /><path d="M12 2l8 8M20 1l-8 9" stroke="#d8482c" strokeWidth="3" /></svg></StatusItem>
    <StatusItem>Português (Brasil)</StatusItem>
    <ViewButtons>
      <ViewButton $on aria-label="Layout de impressão"><svg width="16" height="14"><path d="M1 1h14v12H1z" fill="#f4f4f4" stroke="currentColor" strokeWidth="2" /></svg></ViewButton>
      <ViewButton aria-label="Leitura"><svg width="16" height="14"><path d="M1 1h5l2 2 2-2h5v11h-5l-2 2-2-2H1zM8 3v10" fill="#eee" stroke="currentColor" strokeWidth="2" /></svg></ViewButton>
      <ViewButton aria-label="Layout da Web"><svg width="16" height="14"><path d="M1 1h13v11H1z" fill="#eee" stroke="currentColor" /><circle cx="12" cy="10" r="4" fill="#3d8a72" /></svg></ViewButton>
      <ViewButton aria-label="Estrutura"><svg width="14" height="12"><path d="M0 1h14M4 5h10M4 9h10" stroke="currentColor" strokeWidth="2" /></svg></ViewButton>
      <ViewButton aria-label="Rascunho"><svg width="14" height="12"><path d="M0 1h14M0 5h14M0 9h14" stroke="currentColor" strokeWidth="2" /></svg></ViewButton>
    </ViewButtons>
    <Zoom>
      100%
      <RoundButton aria-label="Menos zoom">−</RoundButton>
      <ZoomTrack><svg width="12" height="18"><path d="M1 1h10v10l-5 6-5-6z" fill="#ccd7e6" stroke="#66758f" strokeWidth="2" /></svg></ZoomTrack>
      <RoundButton aria-label="Mais zoom">+</RoundButton>
    </Zoom>
  </StatusBar>
);

const DesktopTaskBar = () => (
  <TaskBar>
    <StartButton><FlagIcon />Iniciar</StartButton>
    <QuickLaunch>
      <PlainButton aria-label="Internet Explorer"><IeIcon /></PlainButton>
      <PlainButton aria-label="Área de trabalho"><DesktopIcon /></PlainButton>
      <PlainButton aria-label="Firefox"><FirefoxIcon /></PlainButton>
      <b>»</b>
    </QuickLaunch>
    <Task $on><DocIcon />Documento4 - Micros...</Task>
    <Task><FlashingIcon />Flashing</Task>
    <Tray>
      <span>PT</span>
      <TrayIcon $c="#8d90b4" $round />
      <TrayIcon $c="#2f9fc6" />
      <TrayIcon $c="#c9a3ab" $round />
      <TrayIcon $c="#77797f" $round />
      <TrayIcon $c="#2c5fae" />
      <time>19:50</time>
    </Tray>
  </TaskBar>
);

export default function App() {
  const [time, setTime] = useState(25.7);
  const played = (time / duration) * 100;
  return (
    <>
      <GlobalStyle />
      <Player>
        <WordWindow>
          <WordHeader />
          <WordRibbon />
          <WordDocument />
          <WordStatus />
          <DesktopTaskBar />
        </WordWindow>
        <Chrome>
          <TopBar>
            <VideoTitle href="#video">Normatizacao ABNT 2002 ( www.maismonografia.com.br )</VideoTitle>
            <Actions $gap={16}>
              <PlainButton aria-label="Assistir mais tarde"><MdWatchLater size={36} /></PlainButton>
              <PlainButton aria-label="Compartilhar"><MdReply size={40} transform="scale(-1 1)" /></PlainButton>
            </Actions>
          </TopBar>
          <MoreVideos>
            MAIS VÍDEOS
            <svg width="16" height="10" fill="none" stroke="#fff" strokeWidth="3"><path d="M1 9l7-7 7 7" /></svg>
          </MoreVideos>
          <Seek
            type="range"
            aria-label="Progresso"
            min={0}
            max={duration}
            step="any"
            value={time}
            onChange={e => setTime(Number(e.target.value))}
            style={{ background: `linear-gradient(90deg, #f12b24 ${played}%, rgba(212, 220, 226, 0.85) ${played}%)` }}
          />
          <Controls>
            <Playback>
              <PlainButton aria-label="Reproduzir"><svg width="20" height="24"><path d="M0 0l20 12L0 24z" fill="#eee" /></svg></PlainButton>
              <PlainButton aria-label="Volume"><MdVolumeUp size={36} /></PlainButton>
            </Playback>
            <Time>{clock(time)} / {clock(duration)}</Time>
            <Actions $gap={20}>
              <PlainButton aria-label="Legendas"><MdSubtitles size={34} /></PlainButton>
              <PlainButton aria-label="Configurações"><MdSettings size={30} /></PlainButton>
              <PlainButton aria-label="YouTube"><ImYoutube2 size={56} /></PlainButton>
              <PlainButton aria-label="Sair da tela cheia"><MdFullscreenExit size={42} /></PlainButton>
            </Actions>
          </Controls>
        </Chrome>
      </Player>
    </>
  );
}
